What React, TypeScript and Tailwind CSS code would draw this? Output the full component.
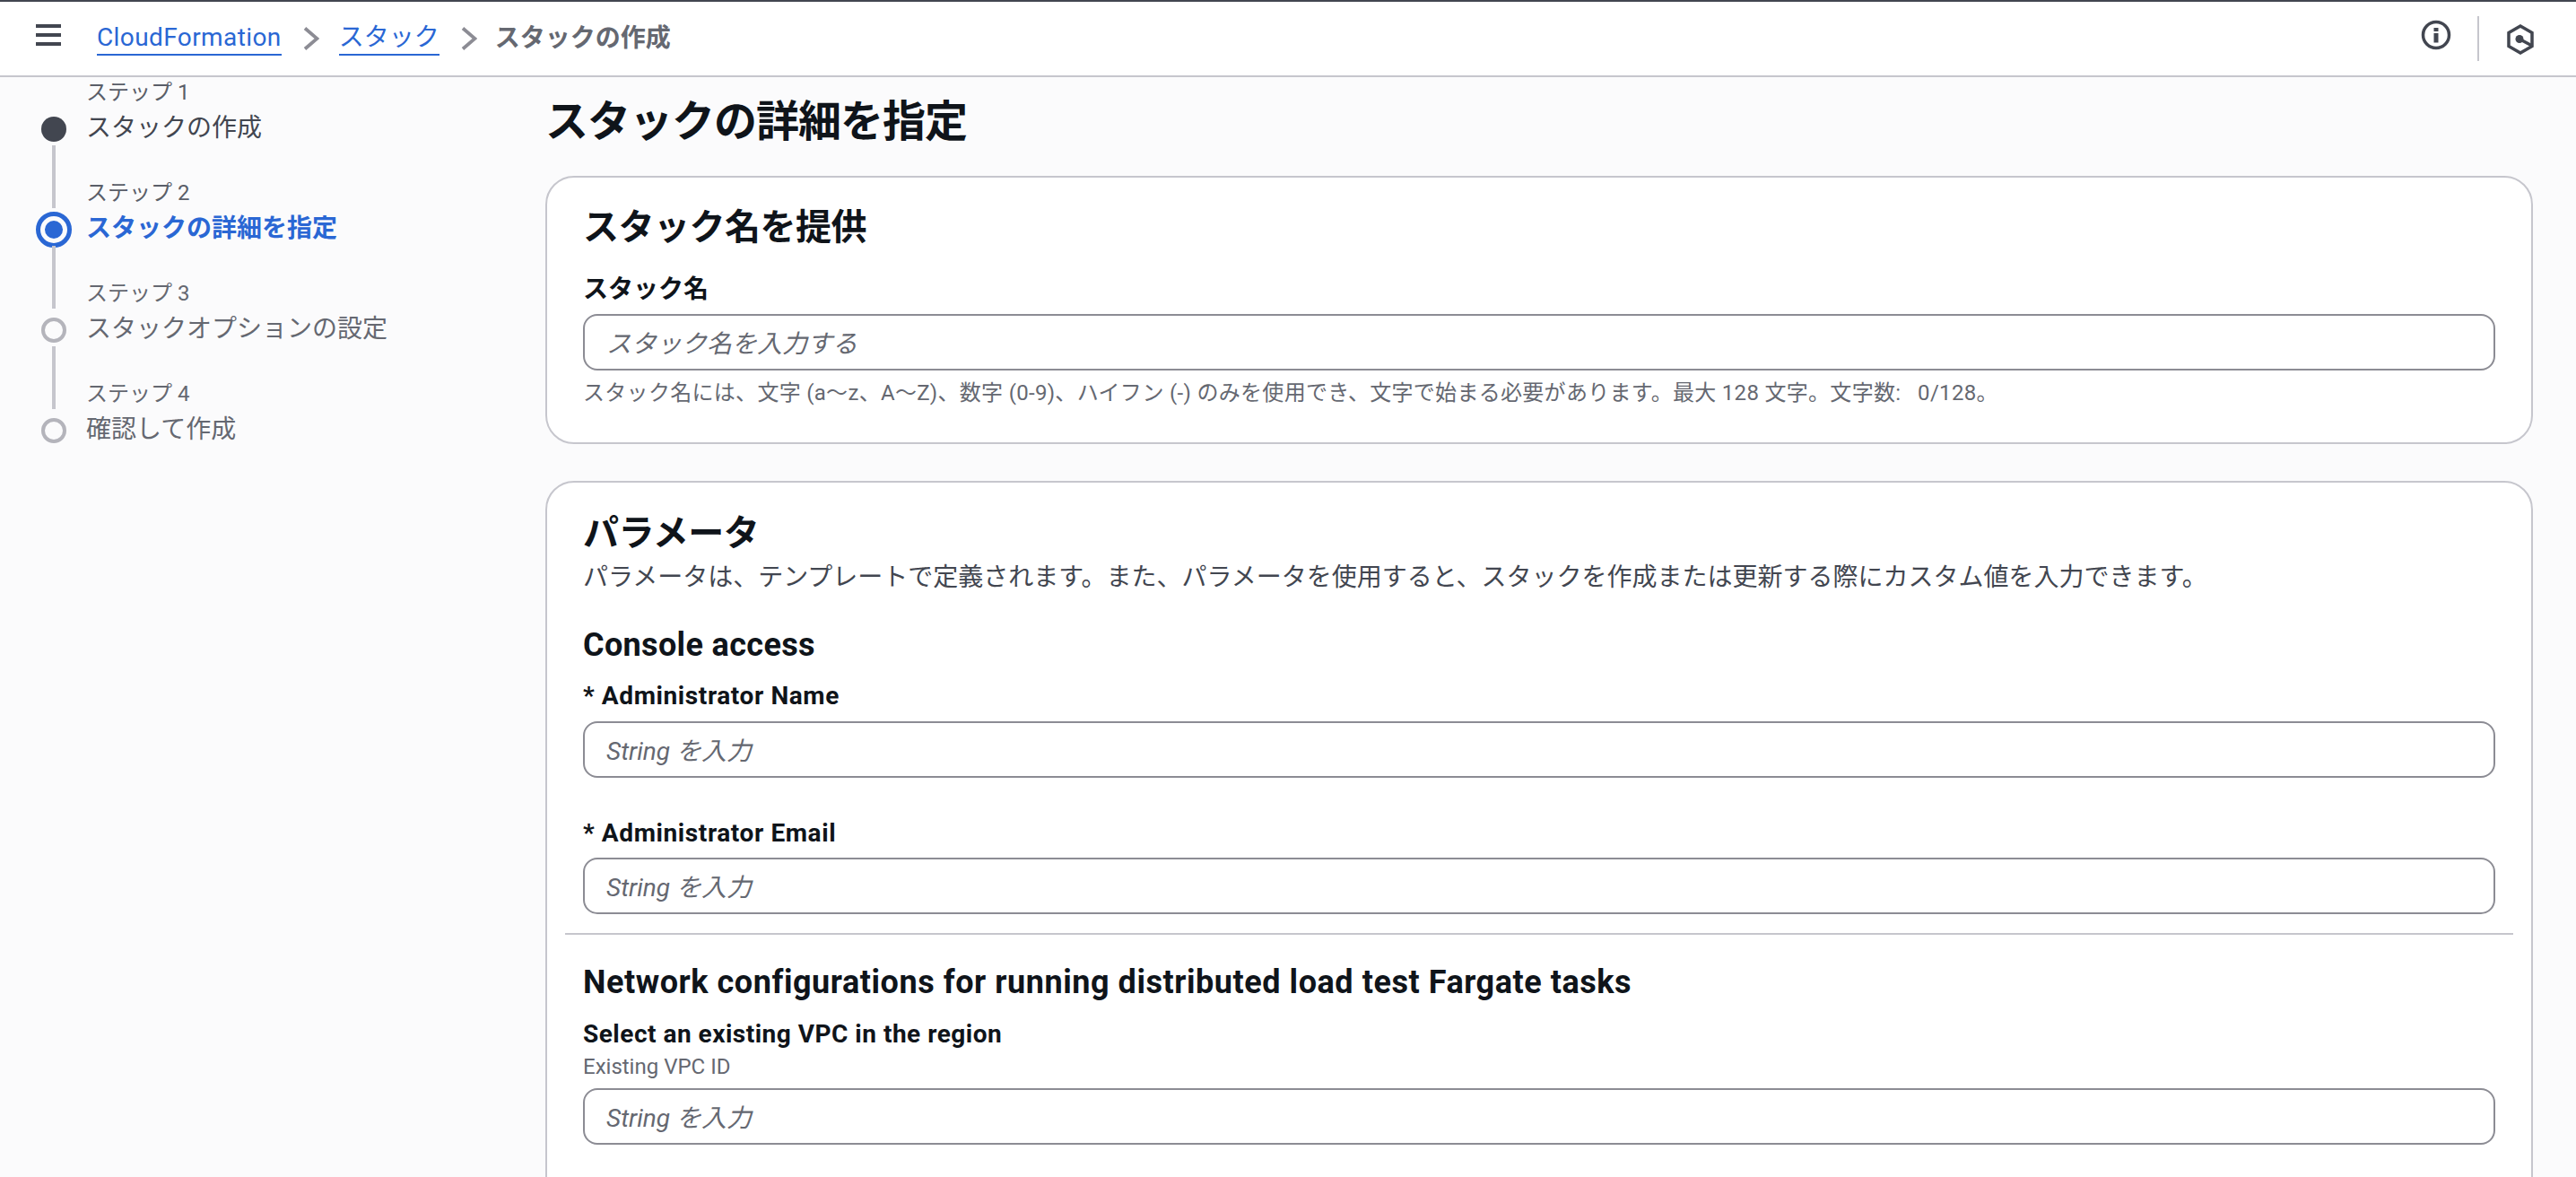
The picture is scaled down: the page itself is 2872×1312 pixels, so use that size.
function Chevron() {
  return (
    <svg width="18" height="26" viewBox="0 0 18 26" fill="none" className="shrink-0">
      <path d="M2 1.5 L15.5 13 L2 24.5" stroke="#8c8c94" strokeWidth="3.8" />
    </svg>
  );
}

function Step({ n, title, state, last }: { n: number; title: string; state: 'done' | 'active' | 'todo'; last?: boolean }) {
  return (
    <div className="flex h-[112px]">
      <div className="relative w-[96px] shrink-0">
        {state === 'done' && <div className="absolute left-[46px] top-[44px] h-[28px] w-[28px] rounded-full bg-[#424650]" />}
        {state === 'active' && (
          <div className="absolute left-[40px] top-[38px] flex h-[40px] w-[40px] items-center justify-center rounded-full border-[5px] border-[#2a67d4]">
            <div className="h-[20px] w-[20px] rounded-full bg-[#2a67d4]" />
          </div>
        )}
        {state === 'todo' && <div className="absolute left-[46px] top-[44px] h-[28px] w-[28px] rounded-full border-[4px] border-[#b4b4bb]" />}
        {!last && <div className="absolute left-[58px] top-[76px] h-[70px] w-[4px] bg-[#c6c6cd]" />}
      </div>
      <div className="pt-[1px]">
        <div className={`h-[32px] text-[24px] leading-[32px] ${state === 'todo' ? 'text-[#656871]' : 'text-[#5a5e68]'}`}>ステップ {n}</div>
        <div
          className={`mt-[4px] text-[28px] leading-[40px] ${
            state === 'active' ? 'font-bold text-[#2a67d4]' : state === 'done' ? 'text-[#424650]' : 'text-[#656871]'
          }`}
        >
          {title}
        </div>
      </div>
    </div>
  );
}

function Field({ placeholder, className }: { placeholder: string; className?: string }) {
  return (
    <input
      readOnly
      placeholder={placeholder}
      className={`block h-[63px] w-full rounded-[16px] border-2 border-[#8c8c94] bg-white px-[24px] pt-[3px] text-[28px] placeholder:italic placeholder:text-[#656871] ${className ?? ''}`}
    />
  );
}

export default function App() {
  return (
    <div
      className="flex h-[1312px] w-[2872px] flex-col overflow-hidden bg-[#fbfbfc]"
      style={{ fontFamily: 'Roboto, "Noto Sans CJK JP", sans-serif' }}
    >
      {/* Header */}
      <header className="flex h-[86px] shrink-0 items-center border-t-2 border-b-2 border-t-[#424650] border-b-[#c6c6cd] bg-white pr-[47px]">
        <svg width="28" height="24" viewBox="0 0 28 24" className="ml-[40px] mb-[8px]" fill="#424650">
          <rect x="0" y="0" width="28" height="4" />
          <rect x="0" y="10" width="28" height="4" />
          <rect x="0" y="20" width="28" height="4" />
        </svg>
        <nav className="ml-[40px] flex items-center text-[28px] leading-[36px]">
          <a className="border-b-2 border-[#2a67d4] tracking-[0.4px] text-[#2a67d4]">CloudFormation</a>
          <span className="ml-[24px] mr-[22px]"><Chevron /></span>
          <a className="border-b-2 border-[#2a67d4] text-[#2a67d4]">スタック</a>
          <span className="ml-[24px] mr-[20px]"><Chevron /></span>
          <span className="font-bold text-[#656871]">スタックの作成</span>
        </nav>
        <div className="ml-auto flex items-center">
          <svg width="34" height="34" viewBox="0 0 34 34" fill="none" className="mb-[8px]">
            <circle cx="17" cy="17" r="14.5" stroke="#424650" strokeWidth="3.5" />
            <rect x="14.5" y="9" width="5" height="4" fill="#424650" />
            <rect x="14.5" y="15" width="5" height="10.5" fill="#424650" />
          </svg>
          <div className="ml-[29px] h-[50px] w-[2px] bg-[#c6c6cd]" />
          <svg width="30" height="34" viewBox="0 0 30 34" fill="none" className="ml-[31px] mt-[2px]">
            <path d="M15 2 L28 9.5 V24.5 L15 32 L2 24.5 V9.5 Z" stroke="#424650" strokeWidth="3.5" />
            <circle cx="14" cy="16.5" r="4.5" fill="#424650" />
            <path d="M14 16.5 L28 24" stroke="#424650" strokeWidth="3.5" />
          </svg>
        </div>
      </header>

      <div className="flex min-h-0 flex-1">
        {/* Steps */}
        <aside className="w-[608px] shrink-0">
          <Step n={1} title="スタックの作成" state="done" />
          <Step n={2} title="スタックの詳細を指定" state="active" />
          <Step n={3} title="スタックオプションの設定" state="todo" />
          <Step n={4} title="確認して作成" state="todo" last />
        </aside>

        <main className="min-w-0 flex-1 pr-[48px]">
          <h1 className="mt-[22px] text-[48px] font-bold leading-[56px] tracking-[-1px] text-[#0f141a]">スタックの詳細を指定</h1>

          <section className="mt-[32px] rounded-[32px] border-2 border-[#c6c6cd] bg-white px-[40px] pt-[32px] pb-[39px]">
            <h2 className="text-[40px] font-bold leading-[48px] tracking-[-0.5px] text-[#0f141a]">スタック名を提供</h2>
            <label className="mt-[25px] block text-[28px] font-bold leading-[40px] text-[#0f141a]">スタック名</label>
            <Field placeholder="スタック名を入力する" className="mt-[7px]" />
            <p className="mt-[9px] whitespace-pre text-[24px] leading-[32px] tracking-[0.3px] text-[#656871]">
              スタック名には、文字 (a〜z、A〜Z)、数字 (0-9)、ハイフン (-) のみを使用でき、文字で始まる必要があります。最大 128 文字。文字数:   0/128。
            </p>
          </section>

          <section className="mt-[41px] rounded-[32px] border-2 border-[#c6c6cd] bg-white px-[40px] pt-[33px] pb-[120px]">
            <h2 className="text-[40px] font-bold leading-[48px] tracking-[-0.5px] text-[#0f141a]">パラメータ</h2>
            <p className="mt-[5px] text-[28px] leading-[40px] text-[#424650]">
              パラメータは、テンプレートで定義されます。また、パラメータを使用すると、スタックを作成または更新する際にカスタム値を入力できます。
            </p>
            <h3 className="mt-[33px] text-[36px] font-bold leading-[44px] tracking-[0.35px] text-[#0f141a]">Console access</h3>
            <label className="mt-[15px] block text-[28px] font-bold leading-[40px] tracking-[0.6px] text-[#0f141a]">* Administrator Name</label>
            <Field placeholder="String を入力" className="mt-[8px]" />
            <label className="mt-[42px] block text-[28px] font-bold leading-[40px] tracking-[0.6px] text-[#0f141a]">* Administrator Email</label>
            <Field placeholder="String を入力" className="mt-[7px]" />
            <div className="-mx-[20px] mt-[21px] h-[2px] bg-[#c6c6cd]" />
            <h3 className="mt-[31px] text-[36px] font-bold leading-[44px] tracking-[0.55px] text-[#0f141a]">
              Network configurations for running distributed load test Fargate tasks
            </h3>
            <label className="mt-[16px] block text-[28px] font-bold leading-[40px] tracking-[0.5px] text-[#0f141a]">Select an existing VPC in the region</label>
            <div className="text-[24px] leading-[32px] text-[#656871]">Existing VPC ID</div>
            <Field placeholder="String を入力" className="mt-[8px]" />
          </section>
        </main>
      </div>
    </div>
  );
}
